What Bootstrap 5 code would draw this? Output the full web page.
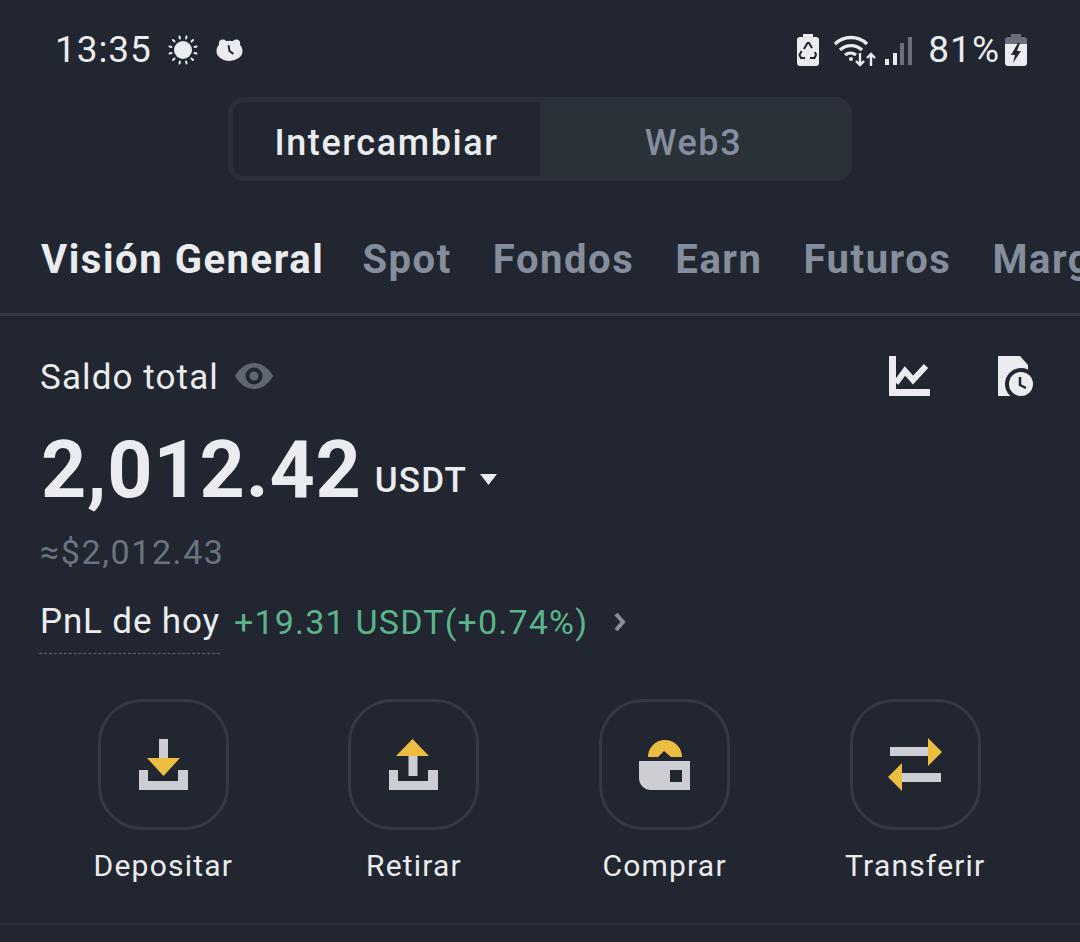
<!DOCTYPE html>
<html lang="es">
<head>
  <meta charset="UTF-8" />
  <title>Billetera</title>
  <link href="https://cdn.jsdelivr.net/npm/bootstrap@5.3.3/dist/css/bootstrap.min.css" rel="stylesheet">
  <style>
    html, body { height: 100%; }
    body {
      background: #212630;
      color: #eaecef;
      font-family: Roboto, "Liberation Sans", sans-serif;
      overflow: hidden;
    }
    .status-row { height: 97px; padding: 32px 52px 0 55px; }
    .status-time { font-size: 37px; line-height: 36px; letter-spacing: .9px; color: #eaecef; }
    .status-pct { font-size: 37px; line-height: 36px; letter-spacing: 1px; }

    .mode-switch {
      width: 624px; height: 84px;
      border: 5px solid #2b3139; border-radius: 16px;
      background: #2b3139; overflow: hidden;
      font-size: 36px; font-weight: 500; letter-spacing: 1.6px;
    }
    .mode-on { width: 307px; background: #212630; border-radius: 10px 0 0 10px; color: #eaecef; padding-top: 8px; }
    .mode-off { color: #848e9c; padding-top: 8px; }

    .tab-strip {
      margin-top: 36px; height: 99px; padding: 0 0 23px 41px; gap: 41px;
      font-size: 40px; font-weight: 700; letter-spacing: 1.55px; white-space: nowrap; overflow: hidden;
      border-bottom: 3px solid #333a45; color: #848e9c;
    }
    .tab-strip span { flex-shrink: 0; }
    .tab-strip .tab-on { color: #eaecef; margin-right: -3px; }

    .summary { padding: 0 46px 0 40px; }
    .total-row { margin-top: 36px; height: 48px; }
    .total-label { font-size: 35px; font-weight: 400; letter-spacing: 1.1px; margin-top: 4px; }
    .amount-row { margin-top: 28px; height: 84px; }
    .amount { font-size: 79px; font-weight: 700; line-height: 84px; letter-spacing: .8px; margin-left: 1px; }
    .amount-unit { font-size: 35px; font-weight: 500; margin-left: 13px; letter-spacing: 1.2px; line-height: 1; padding-bottom: 14px; }
    .amount-caret { margin-left: 13px; margin-bottom: 27px; }
    .approx { margin-top: 20px; font-size: 34px; font-weight: 400; line-height: 40px; color: #6a7382; letter-spacing: 1.6px; }
    .pnl-row { margin-top: 23px; height: 59px; }
    .pnl-label {
      font-size: 35px; font-weight: 400; line-height: 54px; height: 59px; letter-spacing: .85px;
      border-bottom: 1px dashed #5e6673; margin-left: -1px; padding-left: 1px;
    }
    .pnl-value { font-size: 34px; font-weight: 400; color: #5cb58a; margin-left: 14px; letter-spacing: 1.2px; line-height: 54px; }
    .pnl-more { margin-top: 17px; margin-left: 25px; }

    .action-row { margin-top: 45px; padding: 0 38px; height: 226px; border-bottom: 2px solid #2b3139; }
    .action-item { width: 250.67px; }
    .action-tile {
      width: 131px; height: 131px; border: 3px solid #333a45; border-radius: 44px;
    }
    .action-label { margin-top: 18px; font-size: 30px; font-weight: 400; line-height: 36px; color: #eaecef; letter-spacing: 1.2px; }
  </style>
</head>
<body>
  <!-- phone status bar -->
  <div class="status-row d-flex align-items-start justify-content-between">
    <div class="d-flex align-items-center">
      <span class="status-time">13:35</span>
      <svg class="ms-3" width="30" height="30" viewBox="0 0 30 30" fill="#eaecef">
        <circle cx="15" cy="15" r="9"/>
        <g stroke="#eaecef" stroke-width="2" stroke-linecap="round">
          <path d="M11.500 1.500l.4 2M18.500 1.500l-.4 2M11.500 28.500l.4-2M18.500 28.500l-.4-2M1.500 11.500l2 .4M1.500 18.500l2-.4M28.500 11.500l-2 .4M28.500 18.500l-2-.4M5 5l1.500 1.500M23.500 23.500 25 25M5 25l1.500-1.500M23.500 6.500 25 5"/>
        </g>
      </svg>
      <svg style="margin-left:18px" width="27" height="24" viewBox="0 0 28 24">
        <circle cx="7" cy="5" r="4" fill="#eaecef"/><circle cx="21" cy="5" r="4" fill="#eaecef"/>
        <ellipse cx="14" cy="13" rx="13.500" ry="10.500" fill="#eaecef"/>
        <path d="M13 7l1 6 4 3" fill="none" stroke="#212630" stroke-width="2"/>
      </svg>
    </div>
    <div class="d-flex align-items-center">
      <svg width="24" height="34" viewBox="0 0 24 34">
        <rect x="7" y="1" width="10" height="4" fill="#eaecef"/>
        <rect x="1" y="4" width="22" height="29" rx="3" fill="#eaecef"/>
        <path d="M8 16l3.500-6h1.500l3 5M19 19l1 3-1.500 3H14M9 25H5l-1.500-3 2-4" fill="none" stroke="#212630" stroke-width="2"/>
      </svg>
      <svg style="margin-left:13px" width="44" height="34" viewBox="0 0 44 34" fill="none" stroke="#eaecef" stroke-width="3.400">
        <path d="M2 11a23 23 0 0 1 32 0"/>
        <path d="M7 17a16 16 0 0 1 22 0"/>
        <path d="M12 22a9 9 0 0 1 11 0"/>
        <circle cx="18" cy="26" r="2" fill="#eaecef" stroke="none"/>
        <path d="M27 20v12M23 28l4 4 4-4M38 33V21M34 25l4-4 4 4" stroke-width="2.400"/>
      </svg>
      <svg style="margin-left:7px" width="28" height="32" viewBox="0 0 28 32">
        <rect x="1" y="25" width="4" height="6" fill="#eaecef"/>
        <rect x="9" y="19" width="4" height="12" fill="#eaecef"/>
        <rect x="16" y="9" width="4" height="22" fill="#6b707a"/>
        <rect x="24" y="3" width="4" height="28" fill="#6b707a"/>
      </svg>
      <span class="status-pct ms-3">81%</span>
      <svg class="ms-1" width="24" height="34" viewBox="0 0 24 34">
        <rect x="7" y="1" width="10" height="4" fill="#6b707a"/>
        <path d="M1 12V7a3 3 0 0 1 3-3h16a3 3 0 0 1 3 3v5z" fill="#6b707a"/>
        <path d="M1 11h22v19a3 3 0 0 1-3 3H4a3 3 0 0 1-3-3z" fill="#eaecef"/>
        <path d="M14 10l-7 12h4l-2 8 8-12h-4l3-8z" fill="#212630"/>
      </svg>
    </div>
  </div>

  <div class="d-flex justify-content-center">
    <div class="mode-switch d-flex">
      <div class="mode-on d-flex align-items-center justify-content-center">Intercambiar</div>
      <div class="mode-off flex-grow-1 d-flex align-items-center justify-content-center">Web3</div>
    </div>
  </div>

  <div class="tab-strip d-flex align-items-end">
    <span class="tab-on">Visión General</span>
    <span>Spot</span>
    <span>Fondos</span>
    <span>Earn</span>
    <span>Futuros</span>
    <span>Margen</span>
  </div>

  <div class="summary">
    <div class="total-row d-flex align-items-center">
      <span class="total-label">Saldo total</span>
      <svg class="ms-3" width="38" height="26" viewBox="0 0 38 26">
        <path d="M0 13C5 4 12 0 19 0s14 4 19 13c-5 9-12 13-19 13S5 22 0 13z" fill="#5e6673"/>
        <circle cx="19" cy="13" r="8.500" fill="#212630"/>
        <circle cx="19" cy="13" r="4.500" fill="#5e6673"/>
      </svg>
      <svg class="ms-auto" width="41" height="40" viewBox="0 0 41 40">
        <path d="M0 0h7v33h34v7H0z" fill="#eaecef"/>
        <path d="M7 27 16 15l8 9L37 10" fill="none" stroke="#eaecef" stroke-width="6"/>
      </svg>
      <svg style="margin-left:68px" width="36" height="40" viewBox="0 0 36 40">
        <path d="M0 0h22l8 9v31H0z" fill="#eaecef"/>
        <circle cx="23" cy="28" r="16" fill="#212630"/>
        <circle cx="23" cy="28" r="12" fill="#eaecef"/>
        <path d="M22 21v8l6 3" fill="none" stroke="#212630" stroke-width="2.500"/>
      </svg>
    </div>

    <div class="amount-row d-flex align-items-end">
      <span class="amount">2,012.42</span>
      <span class="amount-unit">USDT</span>
      <svg class="amount-caret" width="17" height="11" viewBox="0 0 17 11">
        <path d="M0 0h17l-8.500 11z" fill="#eaecef"/>
      </svg>
    </div>

    <div class="approx">≈$2,012.43</div>

    <div class="pnl-row d-flex align-items-start">
      <span class="pnl-label">PnL de hoy</span>
      <span class="pnl-value">+19.31 USDT(+0.74%)</span>
      <svg class="pnl-more" width="14" height="20" viewBox="0 0 14 20">
        <path d="M3 2l7 8-7 8" fill="none" stroke="#848e9c" stroke-width="4"/>
      </svg>
    </div>
  </div>

  <!-- quick actions -->
  <div class="action-row d-flex">
    <div class="action-item d-flex flex-column align-items-center">
      <div class="action-tile d-flex align-items-center justify-content-center">
        <svg width="49" height="51" viewBox="0 0 49 51">
          <path d="M20 0h9v20h-9z" fill="#ccced3"/>
          <path d="M0 31h9v11h30V31h10v20H0z" fill="#ccced3"/>
          <path d="M8 19h33L24.500 37z" fill="#ecbd40"/>
        </svg>
      </div>
      <div class="action-label">Depositar</div>
    </div>
    <div class="action-item d-flex flex-column align-items-center">
      <div class="action-tile d-flex align-items-center justify-content-center">
        <svg width="49" height="51" viewBox="0 0 49 51">
          <path d="M19.500 16h9v21h-9z" fill="#ccced3"/>
          <path d="M0 31h9v11h30V31h10v20H0z" fill="#ccced3"/>
          <path d="M7 17h33L23.500 0z" fill="#ecbd40"/>
        </svg>
      </div>
      <div class="action-label">Retirar</div>
    </div>
    <div class="action-item d-flex flex-column align-items-center">
      <div class="action-tile d-flex align-items-center justify-content-center">
        <svg width="51" height="51" viewBox="0 0 51 51">
          <path d="M9 18a17 17 0 0 1 34 0H32l-7-6-6 6z" fill="#ecbd40"/>
          <path d="M0 22h51v29H12A12 12 0 0 1 0 39z" fill="#ccced3"/>
          <rect x="31" y="31" width="12" height="12" fill="#212630"/>
        </svg>
      </div>
      <div class="action-label">Comprar</div>
    </div>
    <div class="action-item d-flex flex-column align-items-center">
      <div class="action-tile d-flex align-items-center justify-content-center">
        <svg width="54" height="53" viewBox="0 0 54 53">
          <path d="M2 9h38v9H2z" fill="#ccced3"/>
          <path d="M40 0l14 14-14 14z" fill="#ecbd40"/>
          <path d="M14 35h39v9H14z" fill="#ccced3"/>
          <path d="M14 25 0 39l14 14z" fill="#ecbd40"/>
        </svg>
      </div>
      <div class="action-label">Transferir</div>
    </div>
  </div>
</body>
</html>
